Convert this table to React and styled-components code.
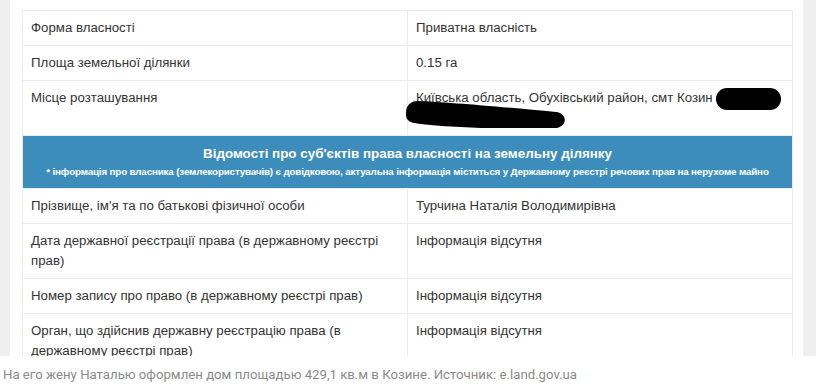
import styled, { createGlobalStyle } from 'styled-components';

const GlobalStyle = createGlobalStyle`
    body {
        margin: 0;
        background: #fff;
        font-family: "Liberation Sans", Arial, sans-serif;
    }
`;

const Page = styled.div`
    width: 816px;
    display: flex;
    flex-direction: column;
`;

const Shot = styled.div`
    height: 356px;
    overflow: hidden;
    background: #efefef;
    padding: 0 13px 0 10px;
`;

const Sheet = styled.div`
    height: 100%;
    background: #fff;
    padding: 10px 10px 0 12px;
`;

const Table = styled.table`
    width: 100%;
    border-collapse: collapse;
    table-layout: fixed;
    border: 1px solid #ececec;
    font-size: 13.25px;
    line-height: 20px;
    color: #333;
`;

const Row = styled.tr`
    border-top: 1px solid #ececec;
`;

const Cell = styled.td`
    padding: 7px 8px;
    vertical-align: top;
    position: relative;
    & + & {
        border-left: 1px solid #ececec;
    }
`;

const SectionCell = styled.td`
    background: #3c8dbc;
    color: #fff;
    text-align: center;
    font-weight: bold;
    padding: 8px 4px;
`;

const SectionTitle = styled.div`
    font-size: 13.4px;
    line-height: 20px;
`;

const SectionNote = styled.div`
    font-size: 9.8px;
    letter-spacing: -0.15px;
    line-height: 16px;
    white-space: nowrap;
`;

const Pill = styled.span`
    position: absolute;
    left: ${p => p.$left}px;
    top: ${p => p.$top}px;
    width: ${p => p.$w}px;
    height: ${p => p.$h}px;
    border-radius: ${p => p.$h / 2}px;
    background: #000;
`;

const Scribble = styled.svg`
    position: absolute;
    left: -4px;
    top: 18px;
`;

const Caption = styled.div`
    margin-top: 10px;
    padding-left: 3px;
    font-family: Roboto, "Liberation Sans", sans-serif;
    font-size: 13.2px;
    line-height: 18px;
    color: #8a8a8a;
`;

const Line = ({ label, value, children }) => (
    <Row>
        <Cell>{label}</Cell>
        <Cell>
            {value}
            {children}
        </Cell>
    </Row>
);

export default function App() {
    return (
        <Page>
            <GlobalStyle />
            <Shot>
                <Sheet>
                    <Table>
                        <tbody>
                            <Line label="Форма власності" value="Приватна власність" />
                            <Line label="Площа земельної ділянки" value="0.15 га" />
                            <Line label="Місце розташування" value="Київська область, Обухівський район, смт Козин">
                                <br />
                                &nbsp;
                                <Pill $left={308} $top={7} $w={65} $h={22} />
                                <Scribble width="166" height="32" viewBox="0 0 166 32">
                                    <path
                                        d="M2 14 C2 5 8 2 14 2 C40 3 100 8 152 13 C164 14 164 29 150 29 L77 29 C50 28 20 26 10 24 C2 22 2 18 2 14 Z"
                                        fill="#000"
                                    />
                                </Scribble>
                            </Line>
                            <Row>
                                <SectionCell colSpan={2}>
                                    <SectionTitle>Відомості про суб'єктів права власності на земельну ділянку</SectionTitle>
                                    <SectionNote>
                                        * інформація про власника (землекористувачів) є довідковою, актуальна інформація міститься у Державному реєстрі речових прав на нерухоме майно
                                    </SectionNote>
                                </SectionCell>
                            </Row>
                            <Line label="Прізвище, ім'я та по батькові фізичної особи" value="Турчина Наталія Володимирівна" />
                            <Line label="Дата державної реєстрації права (в державному реєстрі прав)" value="Інформація відсутня" />
                            <Line label="Номер запису про право (в державному реєстрі прав)" value="Інформація відсутня" />
                            <Line label="Орган, що здійснив державну реєстрацію права (в державному реєстрі прав)" value="Інформація відсутня" />
                        </tbody>
                    </Table>
                </Sheet>
            </Shot>
            <Caption>На его жену Наталью оформлен дом площадью 429,1 кв.м в Козине. Источник: e.land.gov.ua</Caption>
        </Page>
    );
}
